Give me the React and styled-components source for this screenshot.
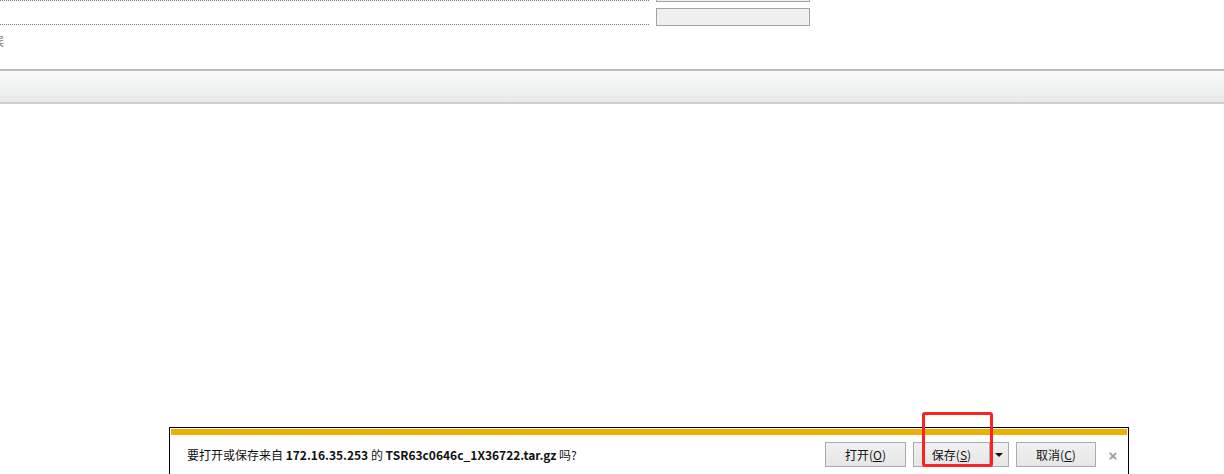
import React from 'react'
import styled, { createGlobalStyle } from 'styled-components'

const Global = createGlobalStyle`
  html, body {
    margin: 0;
    padding: 0;
    background: #fff;
  }
  body {
    font-family: "Microsoft YaHei", "Noto Sans CJK SC", "Liberation Sans", sans-serif;
    overflow: hidden;
  }
`

const Page = styled.div`
  height: 474px;
  display: flex;
  flex-direction: column;
  overflow: hidden;
`

const Form = styled.div`
  display: flex;
  flex-direction: column;
  margin-top: -23px;
`

const Row = styled.div`
  display: grid;
  grid-template-columns: 649px 154px;
  column-gap: 7px;
  height: 24px;
`

const LabelCell = styled.div`
  box-sizing: border-box;
  height: 24px;
  border-bottom: 1px dotted #7a7a7a;
`

const Field = styled.div`
  box-sizing: border-box;
  margin-top: 7px;
  height: 18px;
  border: 1px solid #a2a2a2;
  background: #efefef;
`

const Hint = styled.div`
  margin: 9px 0 0 -8px;
  height: 14px;
  font-size: 12px;
  line-height: 14px;
  color: #8a8a8a;
`

const Toolbar = styled.div`
  flex-shrink: 0;
  margin-top: 21px;
  height: 31px;
  border-top: 2px solid #bdbdbd;
  border-bottom: 2px solid #cfcfcf;
  background: linear-gradient(#fafcfb, #e8eae9);
`

const Notice = styled.div`
  position: relative;
  flex-shrink: 0;
  margin: 323px 0 0 169px;
  width: 960px;
  height: 60px;
  box-sizing: border-box;
  border: 1px solid #000;
  background: #fff;
  padding: 1px 1px 0;
`

const Stripe = styled.div`
  height: 6px;
  background: #f2ae00;
`

const NoticeBody = styled.div`
  display: flex;
  align-items: flex-start;
  padding: 7px 0 0 16px;
`

const Message = styled.div`
  font-size: 12px;
  line-height: 25px;
  color: #111;
  white-space: nowrap;
  b {
    font-weight: bold;
  }
`

const Actions = styled.div`
  margin-left: auto;
  display: flex;
  align-items: flex-start;
  gap: 7px;
`

const Button = styled.button`
  box-sizing: border-box;
  width: ${p => p.$w}px;
  height: 25px;
  padding: 0;
  border: 1px solid #ababab;
  background: linear-gradient(#f1f1f1, #e6e6e6);
  font-family: inherit;
  font-size: 12px;
  color: #111;
  display: flex;
  align-items: center;
  justify-content: center;
  u {
    text-decoration: underline;
  }
`

const Split = styled.div`
  box-sizing: border-box;
  width: 96px;
  height: 25px;
  display: flex;
  border: 1px solid #ababab;
  background: linear-gradient(#f1f1f1, #e6e6e6);
`

const SplitMain = styled.div`
  flex: 1;
  display: flex;
  align-items: center;
  justify-content: center;
  font-size: 12px;
  color: #111;
  border-right: 1px solid #ababab;
`

const SplitArrow = styled.div`
  width: 18px;
  display: flex;
  align-items: center;
  justify-content: center;
  &::after {
    content: '';
    border-left: 4px solid transparent;
    border-right: 4px solid transparent;
    border-top: 4px solid #111;
  }
`

const Close = styled.div`
  box-sizing: border-box;
  width: 31px;
  height: 25px;
  margin-left: -7px;
  padding-left: 3px;
  display: flex;
  align-items: center;
  justify-content: center;
  margin-top: 1px;
  font-family: "Liberation Sans", sans-serif;
  font-size: 15px;
  font-weight: bold;
  color: #9a9a9a;
`

const Highlight = styled.div`
  position: absolute;
  left: 752px;
  top: -16px;
  width: 71px;
  height: 55px;
  box-sizing: border-box;
  border: 3px solid #fa2222;
  border-radius: 3px;
  pointer-events: none;
`

const Key = ({ label, k }) => (
  <>
    {label}(<u>{k}</u>)
  </>
)

const App = () => (
  <Page>
    <Global />
    <Form>
      <Row>
        <LabelCell />
        <Field />
      </Row>
      <Row>
        <LabelCell />
        <Field />
      </Row>
    </Form>
    <Hint>误</Hint>
    <Toolbar />
    <Notice>
      <Stripe />
      <NoticeBody>
        <Message>
          要打开或保存来自 <b>172.16.35.253</b> 的 <b>TSR63c0646c_1X36722.tar.gz</b> 吗?
        </Message>
        <Actions>
          <Button $w={81}><Key label="打开" k="O" /></Button>
          <Split>
            <SplitMain><Key label="保存" k="S" /></SplitMain>
            <SplitArrow />
          </Split>
          <Button $w={80}><Key label="取消" k="C" /></Button>
          <Close>×</Close>
        </Actions>
      </NoticeBody>
      <Highlight />
    </Notice>
  </Page>
)

export default App
